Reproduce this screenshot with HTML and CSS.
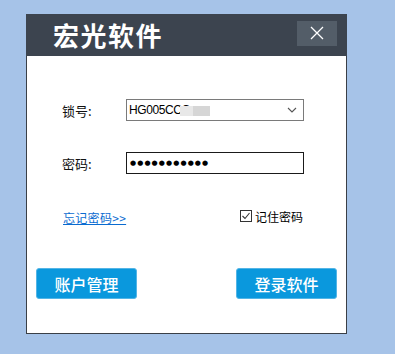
FILE: index.html
```html
<!DOCTYPE html>
<html lang="zh-CN">
<head>
  <meta charset="UTF-8">
  <title>宏光软件</title>
  <link rel="stylesheet" href="styles.css">
</head>
<body>
  <div class="window">
    <div class="titlebar">
      <span class="title">宏光软件</span>
      <button class="close" type="button">
        <svg width="14" height="14" viewBox="0 0 14 14"><path d="M1 1L13 13M13 1L1 13" stroke="#fff" stroke-width="1.3"/></svg>
      </button>
    </div>
    <div class="content">
      <div class="row row-lock">
        <label class="label">锁号:</label>
        <div class="combo">
          <span class="combo-text">HG005CCC</span>
          <span class="mask"><i class="m1"></i><i class="m2"></i></span>
          <svg class="chev" width="10" height="6" viewBox="0 0 10 6"><path d="M1 1L5 5L9 1" fill="none" stroke="#555" stroke-width="1.1"/></svg>
        </div>
      </div>
      <div class="row row-pass">
        <label class="label">密码:</label>
        <div class="password">●●●●●●●●●●●</div>
      </div>
      <div class="options">
        <a class="forgot" href="#">忘记密码&gt;&gt;</a>
        <label class="remember">
          <span class="check">
            <svg width="12" height="12" viewBox="0 0 12 12"><rect x="0.5" y="0.5" width="11" height="11" fill="#fff" stroke="#333"/><path d="M2.5 6L5 8.5L9.5 3" fill="none" stroke="#333" stroke-width="1.1"/></svg>
          </span>
          记住密码
        </label>
      </div>
      <div class="buttons">
        <button class="btn" type="button">账户管理</button>
        <button class="btn" type="button">登录软件</button>
      </div>
    </div>
  </div>
</body>
</html>
```

FILE: styles.css
```css
* {
  margin: 0;
  padding: 0;
  box-sizing: border-box;
}

body {
  background-color: #a6c3e8;
  font-family: "Noto Sans CJK SC", "Noto Sans", sans-serif;
  width: 395px;
  height: 354px;
  overflow: hidden;
}

.window {
  margin: 14px 0 0 26px;
  width: 321px;
  height: 320px;
  background: #ffffff;
  border: 1px solid #3a3f46;
  border-top: none;
}

.titlebar {
  height: 42px;
  background: #3c444f;
  margin: 0 -1px;
  display: flex;
  align-items: center;
  justify-content: space-between;
  padding: 0 10px 0 27px;
}

.title {
  color: #ffffff;
  font-size: 26px;
  font-weight: bold;
  letter-spacing: 1.5px;
  line-height: 1;
}

.close {
  width: 40px;
  height: 25px;
  background: #535d68;
  border: none;
  display: flex;
  align-items: center;
  justify-content: center;
  margin-top: -4px;
}

.content {
  padding: 43px 0 0 35px;
}

.row {
  display: flex;
  align-items: center;
  height: 22px;
}

.row-pass {
  margin-top: 31px;
}

.label {
  width: 64px;
  font-size: 13px;
  color: #111;
}

.combo {
  position: relative;
  width: 178px;
  height: 22px;
  border: 1px solid #7a7a7a;
  display: flex;
  align-items: center;
  padding: 0 6px 0 2px;
  font-family: "Liberation Sans", Arial, sans-serif;
  font-size: 12px;
  color: #000;
}

.combo-text {
  letter-spacing: -0.4px;
  white-space: nowrap;
}

/* blurred tail of the lock number */
.mask {
  position: absolute;
  left: 53px;
  top: 6px;
  display: flex;
  height: 10px;
}

.mask .m1 {
  width: 13px;
  background: #e8e8e8;
}

.mask .m2 {
  width: 17px;
  background: #d6d6d6;
}

.chev {
  margin-left: auto;
}

.password {
  width: 178px;
  height: 22px;
  border: 1px solid #1a1a1a;
  padding: 0 0 0 3px;
  font-family: "DejaVu Sans", sans-serif;
  font-size: 7px;
  letter-spacing: 1.1px;
  line-height: 20px;
  color: #000;
}

.options {
  display: flex;
  justify-content: space-between;
  align-items: center;
  margin-top: 32px;
  padding-right: 43px;
  padding-left: 1px;
}

.forgot {
  color: #0a6bd0;
  font-size: 12px;
  letter-spacing: 0.3px;
  text-decoration: underline;
  margin-top: 3px;
}

.remember {
  display: flex;
  align-items: center;
  gap: 3px;
  font-size: 12px;
  color: #000;
}

.check {
  display: flex;
}

.buttons {
  display: flex;
  justify-content: space-between;
  margin-top: 42px;
  margin-left: -26px;
  padding-right: 9px;
}

.btn {
  width: 101px;
  height: 31px;
  background: #0a98dd;
  border: 1px solid #53b5e6;
  border-radius: 3px;
  color: #ffffff;
  font-family: "Noto Sans CJK SC", sans-serif;
  font-size: 16px;
  font-weight: 500;
}
```
